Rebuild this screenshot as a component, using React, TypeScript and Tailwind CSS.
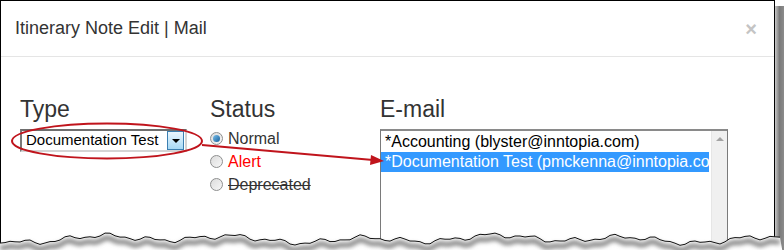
import React from "react";

const Radio = ({ checked }: { checked?: boolean }) => (
  <span className="w-[13px] h-[13px] rounded-full border border-[#8e8f8f] bg-gradient-to-br from-[#dcdcdc] to-[#f7f7f7] flex items-center justify-center shrink-0">
    {checked && <span className="w-[7px] h-[7px] rounded-full bg-gradient-to-br from-[#7ac1ec] to-[#0f5f9a]"></span>}
  </span>
);

const tornPoints = () => {
  const pts: string[] = [];
  for (let x = 0; x <= 784; x += 5) {
    const y =
      239 +
      2.6 * Math.sin(x / 21) +
      1.8 * Math.sin(x / 6.7 + 1) +
      1.2 * Math.cos(x / 3.1) +
      1.5 * Math.sin(x / 57 + 2);
    pts.push(`${x},${y.toFixed(1)}`);
  }
  return pts;
};

const App = () => {
  const pts = tornPoints();
  const line = pts.join(" ");
  const fill = `0,260 ${line} 784,260`;
  const shadow = pts
    .map((p) => {
      const [x, y] = p.split(",").map(Number);
      return `${x},${(y + 5).toFixed(1)}`;
    })
    .join(" ");

  return (
    <div className="w-[784px] h-[250px] relative overflow-hidden bg-white font-['Liberation_Sans',Arial,sans-serif]">
      <div className="flex h-full">
        <div className="w-[775px] h-full border-l border-t border-r border-black bg-white flex flex-col shrink-0 overflow-hidden">
          {/* header */}
          <div className="h-[56px] shrink-0 border-b border-[#e5e5e5] flex items-center justify-between pl-[14px] pr-[17px]">
            <h1 className="text-[18px] text-[#333]">Itinerary Note Edit | Mail</h1>
            <span className="text-[20px] font-bold text-[#c4c4c4] leading-none">×</span>
          </div>

          {/* body */}
          <div className="flex shrink-0 pt-[39px] pl-[19px]">
            <div className="w-[190px]">
              <h2 className="text-[23px] leading-[26px] text-[#333]">Type</h2>
              <div className="mt-[7px] w-[167px] h-[23px] border-2 border-t-[#6e6e6e] border-l-[#7a7a7a] border-b-[#d4d4d4] border-r-[#d4d4d4] bg-white flex items-center justify-between pl-[4px] pr-[1px]">
                <span className="text-[15px] text-black">Documentation Test</span>
                <span className="w-[17px] h-[19px] border border-[#3c7fb1] bg-gradient-to-b from-[#eaf6fd] to-[#a7d9f5] flex items-center justify-center">
                  <span className="w-0 h-0 border-l-[4px] border-r-[4px] border-t-[4px] border-l-transparent border-r-transparent border-t-black"></span>
                </span>
              </div>
            </div>

            <div className="w-[170px]">
              <h2 className="text-[23px] leading-[26px] text-[#333]">Status</h2>
              <div className="mt-[5px] flex flex-col text-[16px]">
                <div className="h-[23px] flex items-center gap-[5px]">
                  <Radio checked />
                  <span className="text-[#333]">Normal</span>
                </div>
                <div className="h-[23px] flex items-center gap-[5px]">
                  <Radio />
                  <span className="text-[#ff0000]">Alert</span>
                </div>
                <div className="h-[23px] flex items-center gap-[5px]">
                  <Radio />
                  <span className="text-[#333] line-through">Deprecated</span>
                </div>
              </div>
            </div>

            <div className="flex-1">
              <h2 className="text-[23px] leading-[26px] text-[#333]">E-mail</h2>
              <div className="mt-[7px] w-[348px] h-[130px] border border-[#7a7a7a] border-t-2 border-t-[#8a8a8a] flex bg-white">
                <div className="flex-1 pt-[1px] pr-[2px] text-[16px] leading-[20px] whitespace-nowrap overflow-hidden">
                  <div className="pl-[4px] text-black">*Accounting (blyster@inntopia.com)</div>
                  <div className="pl-[4px] bg-[#3399ff] text-white">*Documentation Test (pmckenna@inntopia.com)</div>
                </div>
                <div className="w-[16px] bg-[#f0f0f0] border-l border-[#e6e6e6] flex justify-center pt-[6px]">
                  <span className="w-0 h-0 border-l-[4px] border-r-[4px] border-b-[4px] border-l-transparent border-r-transparent border-b-[#a3a3a3]"></span>
                </div>
              </div>
            </div>
          </div>
        </div>
        <div className="flex-1 mt-[6px] bg-gradient-to-r from-[#c8c8c8] via-[#7a7a7a] to-[#8c8c8c]"></div>
      </div>

      {/* callout */}
      <svg className="absolute left-0 top-0 pointer-events-none" width="784" height="250">
        <ellipse cx="107" cy="141" rx="95" ry="17.5" fill="none" stroke="#c0141c" strokeWidth="2" />
        <line x1="202" y1="145" x2="373" y2="160" stroke="#c0141c" strokeWidth="2" />
        <polygon points="384,161 371,155 370,165" fill="#c0141c" />
      </svg>

      {/* torn edge */}
      <svg className="absolute left-0 top-0 pointer-events-none" width="784" height="250">
        <defs>
          <filter id="blur" x="-5%" y="-50%" width="110%" height="200%">
            <feGaussianBlur stdDeviation="2" />
          </filter>
        </defs>
        <polygon points={fill} fill="white" />
        <polyline points={shadow} fill="none" stroke="#8a8a8a" strokeWidth="5" filter="url(#blur)" />
        <polyline points={line} fill="none" stroke="#111" strokeWidth="1" />
      </svg>
    </div>
  );
};

export default App;
